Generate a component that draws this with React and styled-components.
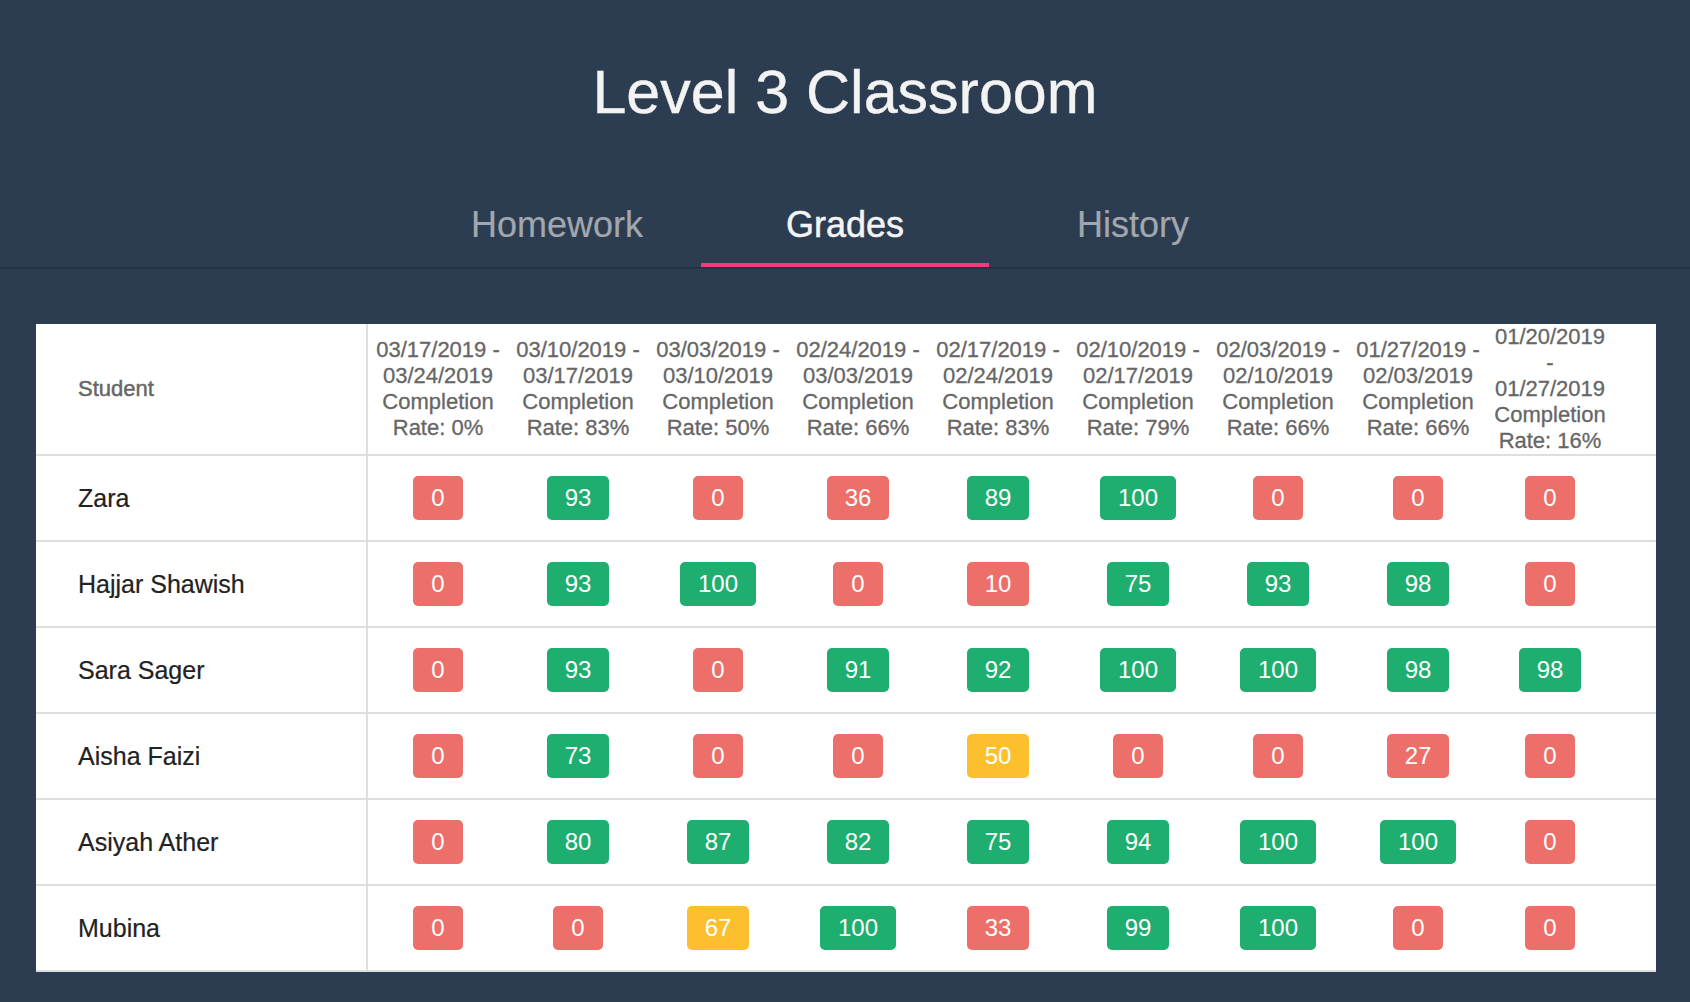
import styled, {createGlobalStyle} from 'styled-components'

const GlobalStyle = createGlobalStyle`
  html, body {
    margin: 0;
    padding: 0;
    background-color: #2c3d51;
    font-family: 'Helvetica Neue', Helvetica, 'Liberation Sans', Arial, sans-serif;
  }
`

let Page = styled.div`
  min-height: 1002px;
  background-color: #2c3d51;
  padding-top: 56px;
  box-sizing: border-box;
`

let Title = styled.h1`
  margin: 0;
  text-align: center;
  font-size: 61px;
  line-height: 73px;
  font-weight: 400;
  color: #f3f3f3;
  -webkit-text-stroke: 0.4px #f3f3f3;
`

let TabBar = styled.nav`
  display: flex;
  justify-content: center;
  margin-top: 74px;
  border-bottom: 2px solid #233244;
`

let Tab = styled.div`
  width: 288px;
  text-align: center;
  font-size: 36px;
  line-height: 43px;
  padding-bottom: 17px;
  color: ${p => p.active ? '#f4f4f4' : '#a2a7ae'};
  border-bottom: 4px solid ${p => p.active ? '#ee3f7c' : 'transparent'};
  -webkit-text-stroke: ${p => p.active ? '0.5px' : '0.2px'};
  box-sizing: border-box;
  cursor: pointer;
`

let Table = styled.div`
  width: 1620px;
  margin: 55px 0 0 36px;
  background: white;
  border-bottom: 2px solid #dedede;
`

let Row = styled.div`
  display: grid;
  grid-template-columns: 332px repeat(8, 140px) 124px 1fr;
  align-items: center;
  height: ${p => p.head ? '130px' : '84px'};
  border-bottom: ${p => p.last ? '0' : '2px solid #dedede'};
`

let NameCell = styled.div`
  height: 100%;
  display: flex;
  align-items: center;
  padding-left: 42px;
  box-sizing: border-box;
  border-right: 2px solid #dedede;
  font-size: ${p => p.head ? '22px' : '25px'};
  color: ${p => p.head ? '#666' : '#222'};
  -webkit-text-stroke: ${p => p.head ? '0.45px' : '0.2px'};
`

let HeadCell = styled.div`
  text-align: center;
  font-size: 22px;
  line-height: 26px;
  color: #666;
  -webkit-text-stroke: 0.3px #666;

  span {
    display: block;
    white-space: nowrap;
  }
`

let Cell = styled.div`
  text-align: center;
`

let Badge = styled.span`
  display: inline-block;
  height: 44px;
  line-height: 44px;
  padding: 0 18px;
  border-radius: 5px;
  font-size: 24px;
  color: white;
  background: ${p => p.score < 50 ? '#ec6f69' : p.score < 70 ? '#fcc02f' : '#1eae6f'};
`

const weeks = [
  ['03/17/2019 -', '03/24/2019', 'Completion', 'Rate: 0%'],
  ['03/10/2019 -', '03/17/2019', 'Completion', 'Rate: 83%'],
  ['03/03/2019 -', '03/10/2019', 'Completion', 'Rate: 50%'],
  ['02/24/2019 -', '03/03/2019', 'Completion', 'Rate: 66%'],
  ['02/17/2019 -', '02/24/2019', 'Completion', 'Rate: 83%'],
  ['02/10/2019 -', '02/17/2019', 'Completion', 'Rate: 79%'],
  ['02/03/2019 -', '02/10/2019', 'Completion', 'Rate: 66%'],
  ['01/27/2019 -', '02/03/2019', 'Completion', 'Rate: 66%'],
  ['01/20/2019', '-', '01/27/2019', 'Completion', 'Rate: 16%'],
]

const students = [
  {name: 'Zara', scores: [0, 93, 0, 36, 89, 100, 0, 0, 0]},
  {name: 'Hajjar Shawish', scores: [0, 93, 100, 0, 10, 75, 93, 98, 0]},
  {name: 'Sara Sager', scores: [0, 93, 0, 91, 92, 100, 100, 98, 98]},
  {name: 'Aisha Faizi', scores: [0, 73, 0, 0, 50, 0, 0, 27, 0]},
  {name: 'Asiyah Ather', scores: [0, 80, 87, 82, 75, 94, 100, 100, 0]},
  {name: 'Mubina', scores: [0, 0, 67, 100, 33, 99, 100, 0, 0]},
]

const App = () => {
  return <Page>
    <GlobalStyle/>
    <Title>Level 3 Classroom</Title>
    <TabBar>
      <Tab>Homework</Tab>
      <Tab active>Grades</Tab>
      <Tab>History</Tab>
    </TabBar>
    <Table>
      <Row head>
        <NameCell head>Student</NameCell>
        {weeks.map((lines, i) => <HeadCell key={i}>
          {lines.map((l, j) => <span key={j}>{l}</span>)}
        </HeadCell>)}
      </Row>
      {students.map((s, i) => <Row key={s.name} last={i === students.length - 1}>
        <NameCell>{s.name}</NameCell>
        {s.scores.map((score, j) => <Cell key={j}>
          <Badge score={score}>{score}</Badge>
        </Cell>)}
      </Row>)}
    </Table>
  </Page>
}

export default App
